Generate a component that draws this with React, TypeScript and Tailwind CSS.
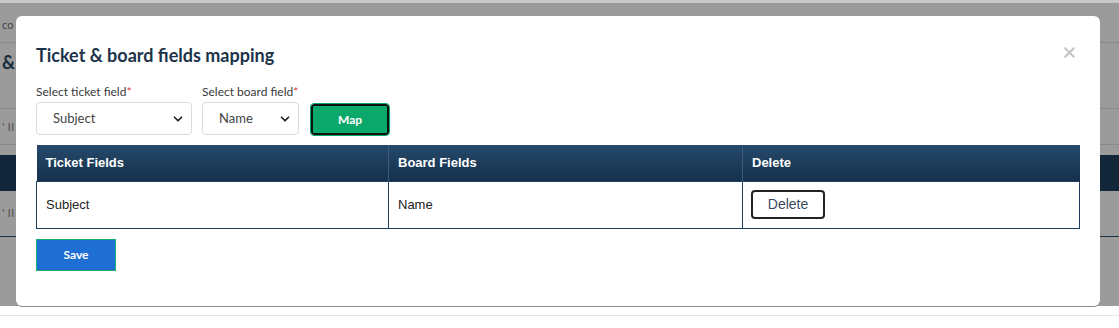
import { ChevronDown, X } from "lucide-react";

function Backdrop() {
    return (
        <div className="flex flex-col h-[328px] bg-white font-['Lato',sans-serif]">
            <div className="h-[3px] bg-[#c8c8c8]" />
            <div className="h-[303px] bg-[#9b9b9b] flex flex-col">
                <div className="h-[40px] pl-[2px] pt-[16px] text-[11px] text-[#444] leading-none border-b border-[#8a8a8a]">co</div>
                <div className="h-[66px] pl-[2px] pt-[10px] text-[18px] font-bold text-[#1a2b3c] leading-none border-b border-[#8a8a8a]">&amp;</div>
                <div className="h-[36px] pl-[2px] pt-[12px] text-[12px] text-[#555] leading-none border-b border-[#8a8a8a]">' II</div>
                <div className="h-[10px]" />
                <div className="h-[36px] bg-[#13273a]" />
                <div className="h-[46px] pl-[2px] pt-[16px] text-[12px] text-[#555] leading-none border-b border-[#1d3146]">' II</div>
            </div>
            <div className="h-[10px] border-b border-[#e5e5e5]" />
        </div>
    );
}

function SelectBox({ value, width, pad }: { value: string; width: string; pad: string }) {
    return (
        <div className={`${width} h-[33px] flex items-center justify-between border border-[#dcdcdc] rounded-[4px] bg-white pr-[6px] ${pad}`}>
            <span className="text-[13px] text-[#444]">{value}</span>
            <ChevronDown className="w-[14px] h-[14px] text-[#222]" strokeWidth={3} />
        </div>
    );
}

export default function App() {
    return (
        <div className="relative w-[1119px] h-[328px] overflow-hidden">
            <Backdrop />
            <div className="absolute left-[16px] top-[16px] w-[1084px] h-[290px] bg-white rounded-[6px] shadow-[0_1px_0_#8c8c8c] font-['Lato',sans-serif]">
                <div className="flex flex-col px-[20px] pt-[28px]">
                    <div className="flex items-start justify-between">
                        <h2 className="text-[18px] font-bold text-[#1c3349] leading-[22px]">Ticket &amp; board fields mapping</h2>
                        <X className="w-[17px] h-[17px] text-[#c4c4c4] mr-[2px] mt-[0px]" strokeWidth={3} />
                    </div>
                    <div className="flex items-end gap-[10px] mt-[19px]">
                        <div className="flex flex-col gap-[3px]">
                            <label className="text-[12px] text-[#3a3a3a] leading-[14px]">
                                Select ticket field<span className="text-[#e0343a]">*</span>
                            </label>
                            <SelectBox value="Subject" width="w-[156px]" pad="pl-[16px]" />
                        </div>
                        <div className="flex flex-col gap-[3px]">
                            <label className="text-[12px] text-[#3a3a3a] leading-[14px]">
                                Select board field<span className="text-[#e0343a]">*</span>
                            </label>
                            <SelectBox value="Name" width="w-[97px]" pad="pl-[16px]" />
                        </div>
                        <button className="w-[78px] h-[31px] ml-[2px] mb-[0px] rounded-[3px] bg-[#0aa86a] border-[2px] border-[#111] outline outline-1 outline-[#0aa86a] text-white text-[12px] font-bold">
                            Map
                        </button>
                    </div>
                    <table className="mt-[10px] w-[1044px] border-collapse font-['Liberation_Sans',Arial,sans-serif] text-[13px]">
                        <thead>
                            <tr className="h-[36px] bg-gradient-to-b from-[#26496a] to-[#15314d] text-white text-left">
                                <th className="w-[352px] pl-[9px] font-bold border-r border-[#3d5c7a]">Ticket Fields</th>
                                <th className="w-[354px] pl-[9px] font-bold border-r border-[#3d5c7a]">Board Fields</th>
                                <th className="pl-[9px] font-bold">Delete</th>
                            </tr>
                        </thead>
                        <tbody>
                            <tr className="h-[47px] text-[#222]">
                                <td className="pl-[9px] border border-[#1f3e5c]">Subject</td>
                                <td className="pl-[9px] border border-[#1f3e5c]">Name</td>
                                <td className="pl-[8px] border border-[#1f3e5c]">
                                    <button className="w-[74px] h-[29px] rounded-[4px] border-[2px] border-[#222] bg-white text-[14px] text-[#3b4b5e]">
                                        Delete
                                    </button>
                                </td>
                            </tr>
                        </tbody>
                    </table>
                    <div className="mt-[10px]">
                        <button className="w-[80px] h-[32px] bg-[#1f6ed4] border border-[#1cae6c] text-white text-[12px] font-bold">
                            Save
                        </button>
                    </div>
                </div>
            </div>
        </div>
    );
}
